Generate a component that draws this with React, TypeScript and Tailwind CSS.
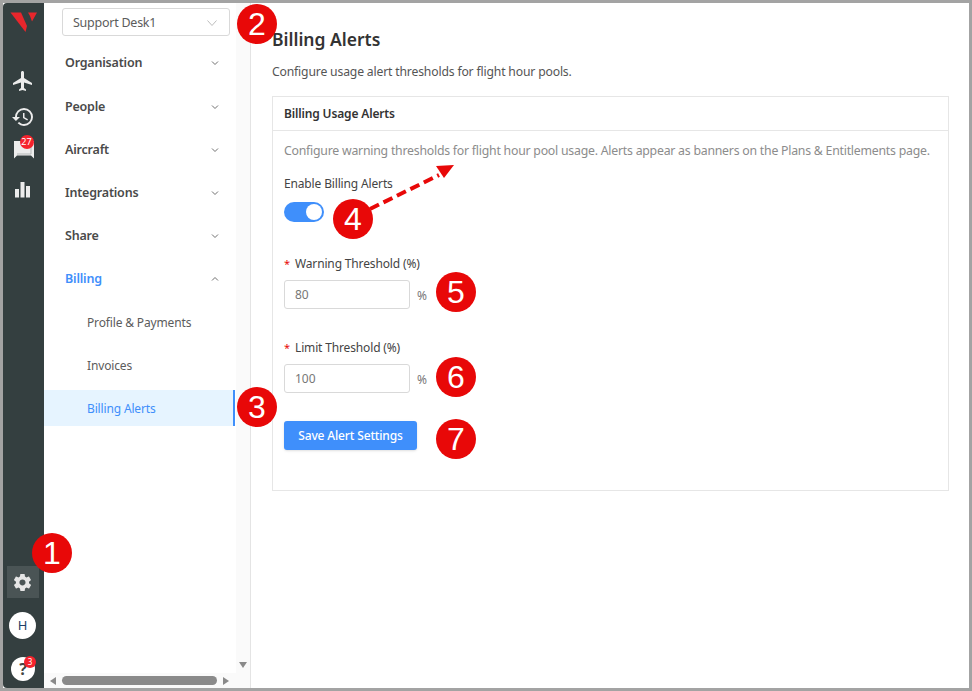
import React from "react";
import { MdFlight, MdHistory } from "react-icons/md";
import { IoMdSettings } from "react-icons/io";

const font = { fontFamily: '"Noto Sans", "Open Sans", sans-serif' };

function Chevron({ up = false }: { up?: boolean }) {
  return (
    <svg width="8" height="6" viewBox="0 0 8 6" fill="none" stroke="#707070" strokeWidth="1" className="-mt-[2px]">
      <path d={up ? "M1 4.500 L4 1.500 L7 4.500" : "M1 1.500 L4 4.500 L7 1.500"} />
    </svg>
  );
}

function Marker({ n, className }: { n: number; className: string }) {
  return (
    <div
      className={`absolute w-10 h-10 rounded-full bg-[#e80808] text-white flex items-center justify-center text-[32px] leading-none ${className}`}
      style={{ fontFamily: '"Liberation Sans", sans-serif' }}
    >
      {n}
    </div>
  );
}

function Section({ label, active = false, open = false, tall = false }: { label: string; active?: boolean; open?: boolean; tall?: boolean }) {
  return (
    <div className={`${tall ? "h-[45px]" : "h-[43px]"} flex items-center justify-between pl-[21px] pr-[17px]`}>
      <span className={`text-[12.500px] font-semibold tracking-[-0.2px] ${active ? "text-[#3f8ffb]" : "text-[#4a4a4a]"}`}>{label}</span>
      <Chevron up={open} />
    </div>
  );
}

function Field({ label, value }: { label: string; value: string }) {
  return (
    <div>
      <div className="h-[20px] flex items-center text-[12px] tracking-[-0.15px] text-[#444]">
        <span className="text-[#e80808] mr-[6px] w-[5px] text-[11px]">*</span>
        {label}
      </div>
      <div className="flex items-center mt-[6px]">
        <div className="w-[126px] h-[29px] border border-[#d9d9d9] rounded-[3px] pl-[10px] pt-px flex items-center text-[12px] text-[#777]">
          {value}
        </div>
        <span className="ml-[7px] mt-[3px] text-[12px] text-[#777]">%</span>
      </div>
    </div>
  );
}

export default function App() {
  return (
    <div className="relative w-[972px] h-[691px] border-[3px] border-[#a3a3a3] bg-white flex overflow-hidden" style={font}>
      <aside className="w-[41px] shrink-0 bg-[#343f40] flex flex-col items-center rounded-tl-[4px] rounded-bl-[4px]">
        <svg width="28" height="21" viewBox="0 0 28 21" className="mt-[9px]">
          <path d="M0.500 0.500 H11 L17 14 L15.500 20 Z" fill="#e8262c" />
          <path d="M18 0.500 H27 L22 9.500 L20 4 Z" fill="#e8262c" />
        </svg>
        <MdFlight size={24} color="#ececec" className="mt-[36px] mr-[2px]" />
        <MdHistory size={24} color="#ececec" className="mt-[12px] mr-[2px]" />
        <div className="relative mt-[9px] w-[24px] h-[24px]">
          <svg width="22" height="21" viewBox="0 0 22 21" className="absolute left-px top-[1px]">
            <path d="M1 2 H21 V19.500 L18 16.500 H4 L1 19.500 Z" fill="#ececec" />
            <path d="M4 15 H18 V6" stroke="#b5b8b8" strokeWidth="1" fill="none" />
          </svg>
          <div className="absolute left-[8px] -top-[3px] w-[14px] h-[14px] rounded-full bg-[#f5222d] text-white text-[9px] leading-[14px] text-center">27</div>
        </div>
        <svg width="15" height="16" viewBox="0 0 15 16" className="mt-[20px] mr-[2px]" fill="#ececec">
          <rect x="0" y="7" width="4" height="8.500" />
          <rect x="5.500" y="0" width="4" height="15.500" />
          <rect x="11" y="4" width="4" height="11.500" />
        </svg>
        <div className="mt-auto w-[32px] h-[32px] mr-[2px] bg-[#4a5455] flex items-center justify-center">
          <IoMdSettings size={21} color="#e6e6e6" />
        </div>
        <div className="mt-[14px] w-[27px] h-[27px] mr-[2px] rounded-full bg-white text-[#1d3f66] text-[13px] flex items-center justify-center">H</div>
        <div className="relative mt-[18px] mb-[7px] mr-[1px] w-[24px] h-[24px] rounded-full bg-white text-[#444] font-bold text-[16px] flex items-center justify-center">
          ?
          <div className="absolute -right-[1px] -top-[1px] w-[12px] h-[12px] rounded-full bg-[#f5222d] text-white text-[8px] leading-[12px] text-center font-normal">3</div>
        </div>
      </aside>

      <nav className="w-[207px] shrink-0 border-r border-[#e4e4e4] flex flex-col relative">
        <div className="flex-1 flex min-h-0">
          <div className="w-[192px] pt-[5px]">
            <div className="ml-[18px] w-[168px] h-[28px] border border-[#d9d9d9] rounded-[3px] flex items-center justify-between pl-[10px] pr-[12px] pt-[2px] text-[12.500px] tracking-[-0.25px] text-[#5c5c5c]">
              Support Desk1
              <svg width="10" height="6" viewBox="0 0 10 6" fill="none" stroke="#bdbdbd"><path d="M0.500 0.500 L5 5.500 L9.500 0.500" /></svg>
            </div>
            <div className="mt-[5px]">
              <Section label="Organisation" tall />
              <Section label="People" />
              <Section label="Aircraft" />
              <Section label="Integrations" />
              <Section label="Share" />
              <Section label="Billing" active open />
            </div>
            <div className="text-[12px] tracking-[-0.15px] text-[#5c5c5c]">
              <div className="h-[43px] flex items-center pl-[43px]">Profile &amp; Payments</div>
              <div className="h-[43px] flex items-center pl-[43px]">Invoices</div>
              <div className="h-[36px] mt-[3px] pt-px flex items-center pl-[43px] bg-[#e6f4ff] text-[#3f8ffb] border-r-2 border-[#3f8ffb] w-[191px]">Billing Alerts</div>
            </div>
          </div>
          <div className="flex-1 bg-[#fafafa] flex flex-col justify-end items-center pb-[5px]">
            <div className="w-0 h-0 border-x-[4px] border-x-transparent border-t-[6px] border-t-[#8a8a8a]" />
          </div>
        </div>
        <div className="h-[15px] flex items-center bg-[#fafafa] pl-[6px] pr-[20px] gap-[6px]">
          <div className="w-0 h-0 border-y-[4px] border-y-transparent border-r-[6px] border-r-[#8a8a8a]" />
          <div className="w-[155px] h-[9px] rounded-full bg-[#8a8a8a]" />
          <div className="w-0 h-0 border-y-[4px] border-y-transparent border-l-[6px] border-l-[#8a8a8a]" />
        </div>
      </nav>

      <main className="flex-1 pl-[21px] pr-[20px] pt-[24px]">
        <h1 className="text-[17.500px] font-semibold text-[#333] leading-[24px]">Billing Alerts</h1>
        <p className="mt-[12px] text-[12.200px] tracking-[-0.17px] text-[#555] leading-[18px]">Configure usage alert thresholds for flight hour pools.</p>
        <section className="mt-[15px] h-[395px] border border-[#e6e6e6]">
          <div className="h-[34px] border-b border-[#e6e6e6] flex items-center pl-[11px] text-[12px] font-semibold tracking-[-0.15px] text-[#333]">Billing Usage Alerts</div>
          <div className="pl-[11px] pt-[11px]">
            <p className="text-[12.300px] tracking-[-0.235px] leading-[18px] text-[#8c8c8c] whitespace-nowrap">Configure warning thresholds for flight hour pool usage. Alerts appear as banners on the Plans &amp; Entitlements page.</p>
            <div className="mt-[14px] text-[12px] tracking-[-0.15px] leading-[20px] text-[#444]">Enable Billing Alerts</div>
            <div className="mt-[8px] w-[40px] h-[20px] rounded-full bg-[#3f8ffb] relative">
              <div className="absolute right-[2px] top-[2px] w-[16px] h-[16px] rounded-full bg-white" />
            </div>
            <div className="mt-[32px]"><Field label="Warning Threshold (%)" value="80" /></div>
            <div className="mt-[29px]"><Field label="Limit Threshold (%)" value="100" /></div>
            <button className="mt-[28px] w-[133px] h-[29px] rounded-[3px] bg-[#3f8ffb] text-white text-[12px] tracking-[-0.15px] font-medium shadow-sm">Save Alert Settings</button>
          </div>
        </section>
      </main>

      <svg className="absolute left-[350px] top-[155px]" width="110" height="60" viewBox="0 0 110 60" fill="none">
        <path d="M17 51 L86 17" stroke="#e80808" strokeWidth="4" strokeDasharray="10 5" />
        <path d="M101 7 L83 8 L91 20 Z" fill="#e80808" />
      </svg>
      <Marker n={1} className="left-[29px] top-[530px]" />
      <Marker n={2} className="left-[234px] top-[1px]" />
      <Marker n={3} className="left-[234px] top-[384px]" />
      <Marker n={4} className="left-[330px] top-[196px]" />
      <Marker n={5} className="left-[433px] top-[269px]" />
      <Marker n={6} className="left-[433px] top-[354px]" />
      <Marker n={7} className="left-[433px] top-[416px]" />
    </div>
  );
}
